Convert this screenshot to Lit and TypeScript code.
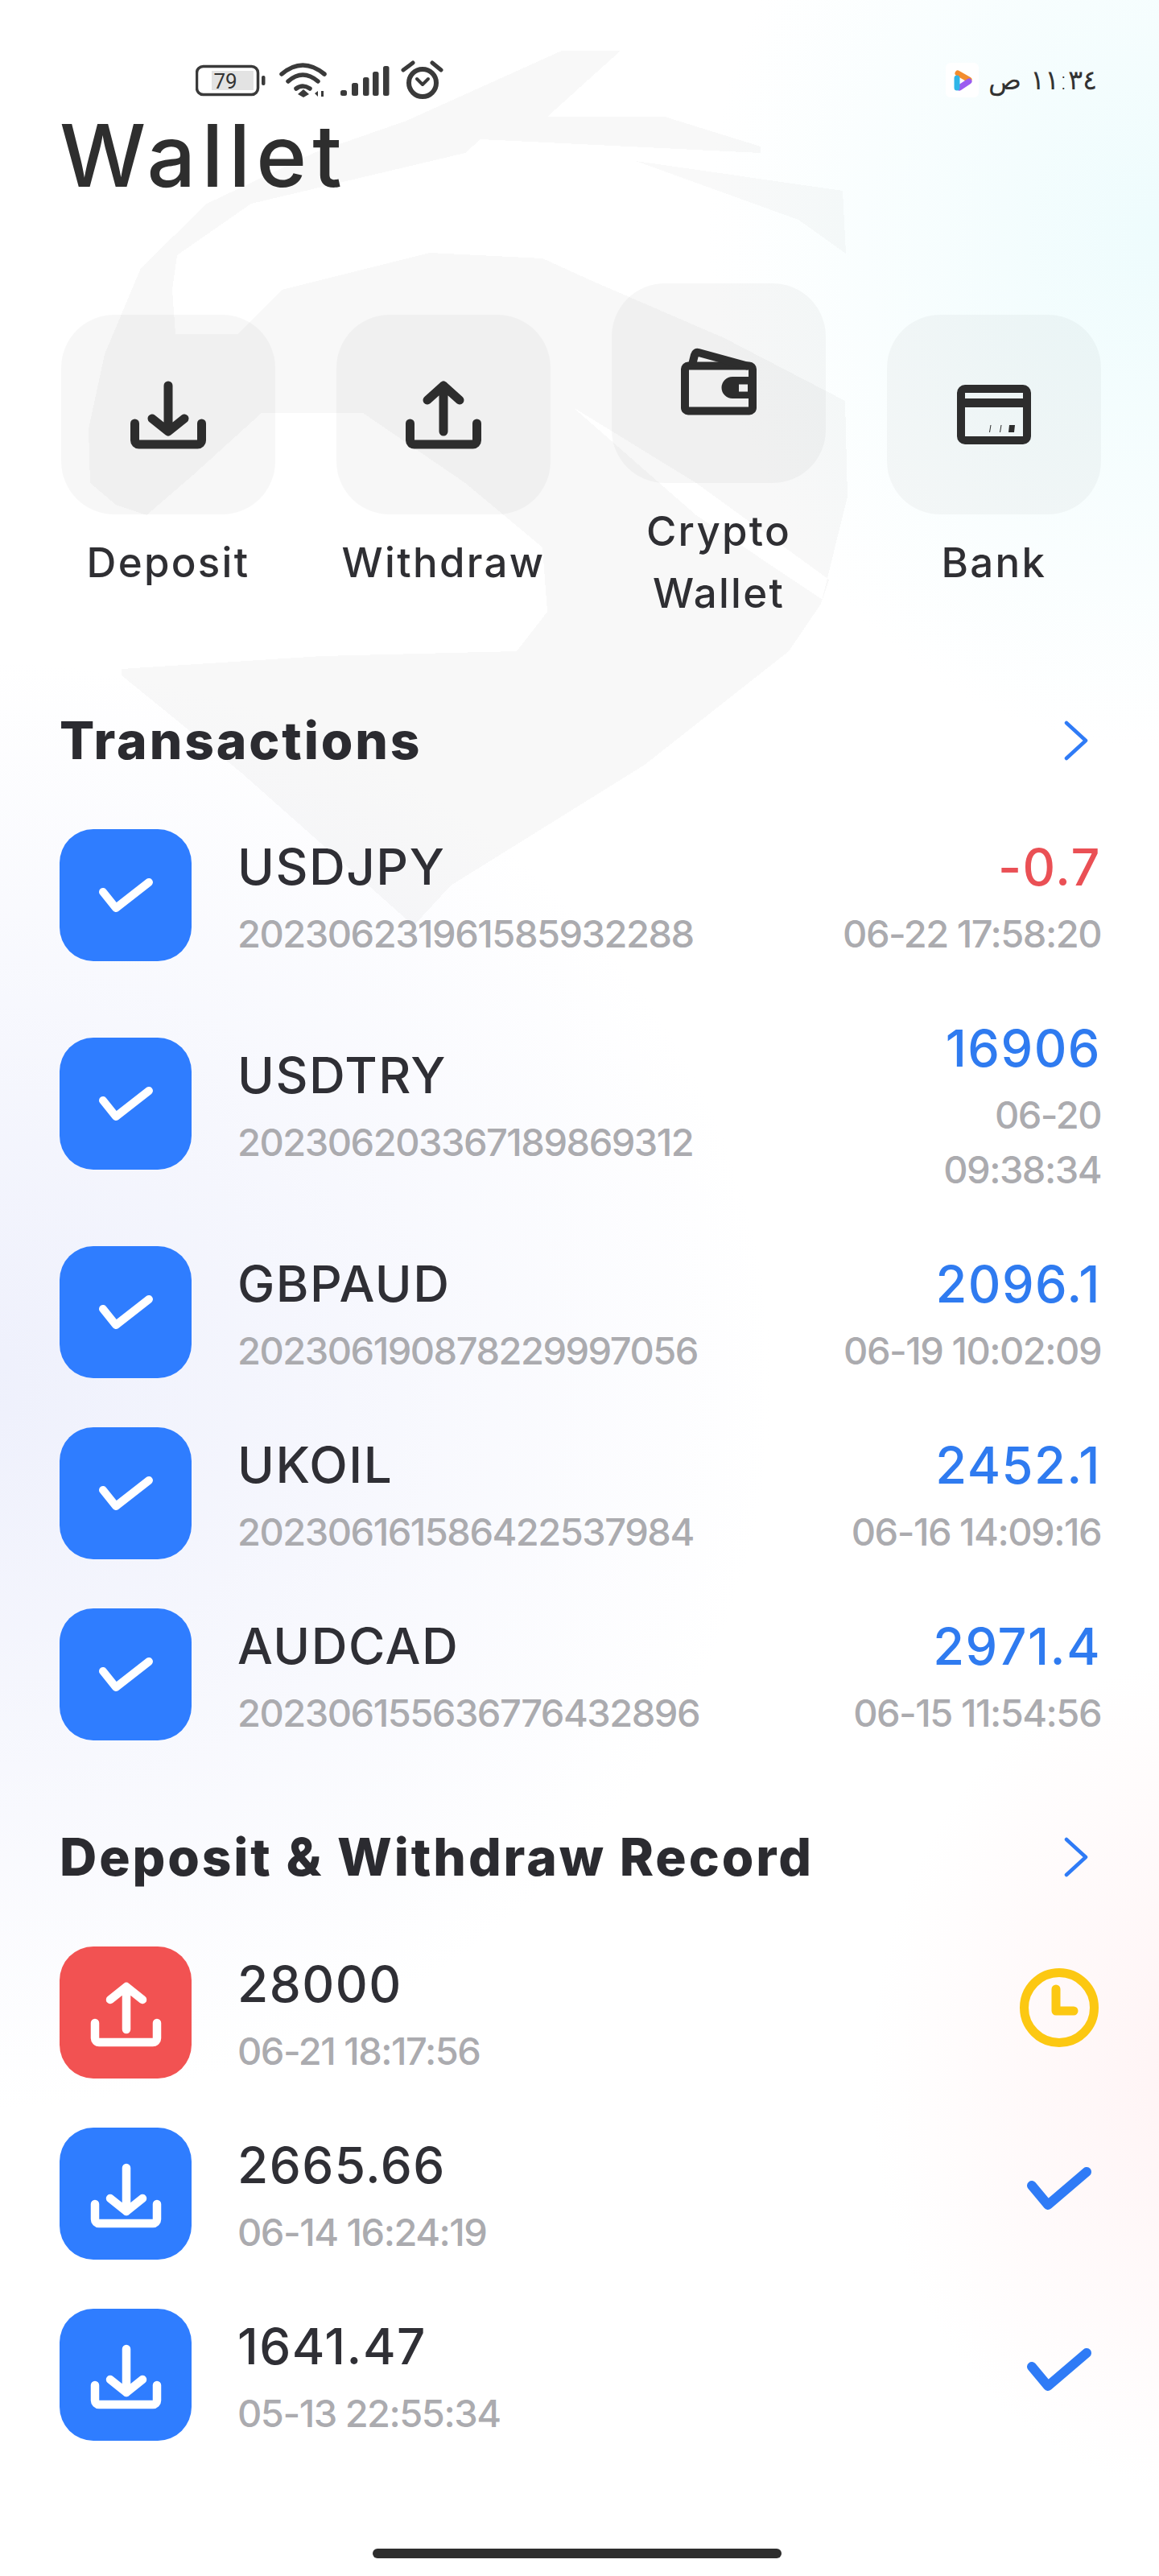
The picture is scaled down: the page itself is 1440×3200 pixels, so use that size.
import { LitElement, html, css, svg } from "lit";
import { customElement } from "lit/decorators.js";

const tray = svg`<path d="M18.500 71V92a5 5 0 0 0 5 5H96.500a5 5 0 0 0 5-5V71"/>`;
const downArrow = svg`<path d="M60 24V80M40 65L60 81L80 65"/>`;
const upArrow = svg`<path d="M60 81V24M40 42L60 24L80 42"/>`;

const icon = (body: unknown) => html`<svg class="ti" viewBox="0 0 120 120" fill="none" stroke="currentColor" stroke-width="11" stroke-linecap="round" stroke-linejoin="round">${body}</svg>`;

const tiles = [
  { label: ["Deposit"], icon: icon(svg`${tray}${downArrow}`) },
  { label: ["Withdraw"], icon: icon(svg`${tray}${upArrow}`) },
  {
    label: ["Crypto", "Wallet"],
    icon: html`<svg class="ti" viewBox="0 0 120 120" fill="none" stroke="currentColor" stroke-width="10" stroke-linejoin="round">
      <rect x="18" y="38.500" width="84" height="56" rx="4"/>
      <path d="M27 37L30 25Q31 21 35 22L97 39"/>
      <path fill="currentColor" stroke="none" fill-rule="evenodd" d="M104 52H77a13.500 13.500 0 0 0 0 27H104ZM85 61.500H96V70.500H85Z"/>
    </svg>`,
  },
  {
    label: ["Bank"],
    icon: html`<svg class="ti" viewBox="0 0 120 120" fill="none" stroke="currentColor" stroke-width="10" stroke-linejoin="round">
      <rect x="19" y="28" width="82" height="64" rx="5"/>
      <rect x="14" y="40" width="92" height="11" fill="currentColor" stroke="none"/>
      <path fill="currentColor" stroke="none" d="M54 82L55.500 73H56.500L55 82ZM67 82L68.500 73H69.500L68 82ZM78 82L79 73H86L85 82Z"/>
    </svg>`,
  },
];

const trades = [
  { name: "USDJPY", id: "202306231961585932288", val: "-0.7", neg: true, date: ["06-22 17:58:20"] },
  { name: "USDTRY", id: "202306203367189869312", val: "16906", date: ["06-20", "09:38:34"] },
  { name: "GBPAUD", id: "202306190878229997056", val: "2096.1", date: ["06-19 10:02:09"] },
  { name: "UKOIL", id: "202306161586422537984", val: "2452.1", date: ["06-16 14:09:16"] },
  { name: "AUDCAD", id: "202306155636776432896", val: "2971.4", date: ["06-15 11:54:56"] },
];

const records = [
  { amount: "28000", date: "06-21 18:17:56", up: true },
  { amount: "2665.66", date: "06-14 16:24:19", up: false },
  { amount: "1641.47", date: "05-13 22:55:34", up: false },
];

const chevron = html`<svg class="chev" viewBox="0 0 30 50" fill="none" stroke="#2f7bf6" stroke-width="4.500" stroke-linecap="round" stroke-linejoin="round"><path d="M3 3L27 25L3 47"/></svg>`;

@customElement("app-root")
export class AppRoot extends LitElement {
  static styles = css`
    :host {
      display: block;
      width: 1440px;
      height: 3200px;
      position: relative;
      overflow: hidden;
      font-family: Inter, "Noto Sans", sans-serif;
      color: #2d2d31;
      background:
        radial-gradient(560px 640px at 1440px 290px, #eefcfd 0%, rgba(238, 252, 253, 0) 100%),
        radial-gradient(1000px 900px at -40px 1720px, #eef0fc 0%, rgba(238, 240, 252, 0) 100%),
        radial-gradient(420px 520px at 1500px 2580px, #fff3f4 0%, rgba(255, 243, 244, 0) 100%),
        #ffffff;
    }
    .mark {
      position: absolute;
      left: 0;
      top: 0;
      width: 1440px;
      height: 1300px;
    }
    .page {
      position: relative;
      display: flex;
      flex-direction: column;
      padding: 75px 72px 0 74px;
    }
    .status {
      display: flex;
      justify-content: space-between;
      align-items: flex-start;
      height: 48px;
      padding-left: 169px;
      padding-right: 5px;
    }
    .status-left {
      width: 310px;
      height: 48px;
      display: block;
    }
    .status-right {
      display: flex;
      align-items: flex-start;
      gap: 12px;
    }
    .play {
      width: 41px;
      height: 43px;
      margin-top: 3px;
      display: block;
    }
    .clock-text {
      font-family: "DejaVu Sans", sans-serif;
      font-size: 34px;
      font-weight: 200;
      line-height: 48px;
      color: #333;
      white-space: nowrap;
    }
    h1 {
      margin: 0;
      height: 137px;
      font-size: 107px;
      line-height: 140px;
      font-weight: 500;
      letter-spacing: 7px;
      color: #2e2e2e;
    }
    .tiles {
      display: flex;
      justify-content: space-between;
      align-items: center;
      margin: 92px 0 0 2px;
    }
    .tile {
      width: 266px;
      display: flex;
      flex-direction: column;
      align-items: center;
      gap: 21px;
    }
    .tile-box {
      width: 266px;
      height: 248px;
      border-radius: 66px;
      background: rgba(0, 0, 0, 0.03);
      display: flex;
      align-items: center;
      justify-content: center;
      color: #2d2d2d;
    }
    .ti {
      width: 120px;
      height: 120px;
      display: block;
    }
    .tile-label {
      font-size: 51px;
      line-height: 77px;
      font-weight: 500;
      letter-spacing: 2.300px;
      text-align: center;
      color: #2f2f33;
    }
    .head {
      display: flex;
      justify-content: space-between;
      align-items: center;
      height: 90px;
      margin-top: 100px;
      padding-right: 16px;
    }
    .head h2 {
      margin: 0;
      font-size: 64px;
      font-weight: 800;
      line-height: 90px;
      letter-spacing: 2.900px;
      color: #2b2b30;
    }
    .chev {
      width: 30px;
      height: 50px;
      display: block;
    }
    .list {
      display: flex;
      flex-direction: column;
      gap: 61px;
      margin-top: 65px;
    }
    .list.second {
      margin-top: 66px;
    }
    .row {
      display: flex;
      align-items: center;
      gap: 57px;
    }
    .badge {
      width: 164px;
      height: 164px;
      border-radius: 42px;
      flex: none;
      display: flex;
      align-items: center;
      justify-content: center;
      background: #2f7dff;
      color: #fff;
    }
    .badge.red {
      background: #f25252;
    }
    .badge svg {
      width: 164px;
      height: 164px;
      display: block;
    }
    .left {
      flex: 1;
      min-width: 0;
    }
    .name {
      font-size: 62px;
      line-height: 94px;
      margin-bottom: 2px;
      font-weight: 500;
      letter-spacing: 1.500px;
      color: #2f2f35;
    }
    .sub {
      font-size: 47px;
      line-height: 68px;
      font-weight: 500;
      letter-spacing: -1.500px;
      color: #ababaf;
      white-space: nowrap;
    }
    .right {
      text-align: right;
      flex: none;
    }
    .val {
      font-size: 63px;
      line-height: 94px;
      margin-bottom: 2px;
      font-weight: 500;
      letter-spacing: 1.500px;
      color: #2f7bf0;
    }
    .val.neg {
      color: #ea5055;
    }
    .status-ico {
      display: block;
      margin-bottom: 12px;
    }
    .clock-ico {
      width: 100px;
      height: 100px;
      margin-right: 2px;
    }
    .check-ico {
      width: 84px;
      height: 56px;
      margin-right: 10px;
    }
    .home {
      width: 508px;
      height: 12px;
      border-radius: 6px;
      background: #2d2d2d;
      margin: 134px 0 0 389px;
    }
  `;

  render() {
    return html`
      <svg class="mark" viewBox="0 0 1440 1300" shape-rendering="crispEdges">
        <path fill="#000" fill-opacity="0.028" fill-rule="evenodd" d="M771 63L698 63L505 150L390 190L257 253L175 333L130 440L110 533L112 600L144 627L182 640L240 590L325 513L451 513L578 600L674 680L680 760L642 809L400 815L151 831L151 839L300 960L514 1150L560 1100L801 950L980 809L1020 750L1053 617L1050 498L900 420L738 350L674 321L534 314L350 360L296 415L218 415L214 360L220 317L312 253L578 190L597 173L945 190L945 182L826 145L680 145Z M712 506L865 640L1022 745L1030 720L865 600Z"/>
        <path fill="#000" fill-opacity="0.024" d="M790 200L1047 237L1051 315L992 273Z"/>
      </svg>
      <div class="page">
        <div class="status">
          <svg class="status-left" viewBox="243 75 310 48">
            <rect x="263" y="88" width="52" height="24" fill="#e3e3e3"/>
            <rect x="244.500" y="82.500" width="76" height="35" rx="8" fill="none" stroke="#3a3a3a" stroke-width="3.500"/>
            <rect x="325" y="94" width="4.500" height="12" rx="2" fill="#3a3a3a"/>
            <text x="280" y="110" text-anchor="middle" font-family="Roboto, sans-serif" font-size="26" fill="#333">79</text>
            <g fill="none" stroke="#3a3a3a" stroke-linecap="round">
              <path stroke-width="5.500" d="M350 92Q376 70 403 92"/>
              <path stroke-width="5.500" d="M358 101Q376 85 395 101"/>
              <path stroke-width="5.500" d="M368 110Q376 104 385 110"/>
            </g>
            <path fill="#3a3a3a" d="M377 111L384 117L377 121L370 117Z"/>
            <path fill="#3a3a3a" d="M391 116L395 113V120ZM399 113H402V120H399Z"/>
            <rect x="423" y="112" width="8" height="7" rx="2.500" fill="#3a3a3a"/>
            <rect x="437" y="103" width="8" height="16" rx="2.500" fill="#3a3a3a"/>
            <rect x="451" y="96" width="7.500" height="23" rx="2.500" fill="#3a3a3a"/>
            <rect x="463" y="89" width="7.500" height="30" rx="2.500" fill="#3a3a3a"/>
            <rect x="476" y="82" width="7.500" height="37" rx="2.500" fill="#3a3a3a"/>
            <g fill="none" stroke="#3a3a3a" stroke-linecap="round" stroke-linejoin="round">
              <circle cx="525" cy="103" r="17" stroke-width="6"/>
              <path stroke-width="5" d="M501 87L513 78M537 78L548 87"/>
              <path stroke-width="4" d="M518 98L525 105L532 98"/>
            </g>
          </svg>
          <div class="status-right">
            <svg class="play" viewBox="1167 78 41 43" fill="none" stroke-width="7" stroke-linecap="round">
              <rect x="1167" y="78" width="41" height="43" rx="6" fill="#fff" stroke="none"/>
              <path stroke="#f28c2e" d="M1182 91L1196 99"/>
              <path stroke="#9b5cf0" d="M1184 109L1196 101"/>
              <path stroke="#2fb5e8" d="M1181 97V109"/>
            </svg>
            <span class="clock-text" dir="rtl">١١:٣٤ ص</span>
          </div>
        </div>

        <h1>Wallet</h1>

        <div class="tiles">
          ${tiles.map(
            (t) => html`<div class="tile">
              <div class="tile-box">${t.icon}</div>
              <div class="tile-label">${t.label.map((l) => html`<div>${l}</div>`)}</div>
            </div>`
          )}
        </div>

        <div class="head"><h2>Transactions</h2>${chevron}</div>
        <div class="list">
          ${trades.map(
            (t) => html`<div class="row">
              <div class="badge">
                <svg viewBox="0 0 164 164" fill="none" stroke="currentColor" stroke-width="10" stroke-linecap="round" stroke-linejoin="round"><path d="M54 78L70 98L111 66"/></svg>
              </div>
              <div class="left">
                <div class="name">${t.name}</div>
                <div class="sub">${t.id}</div>
              </div>
              <div class="right">
                <div class="val ${t.neg ? "neg" : ""}">${t.val}</div>
                ${t.date.map((d) => html`<div class="sub">${d}</div>`)}
              </div>
            </div>`
          )}
        </div>

        <div class="head"><h2>Deposit &amp; Withdraw Record</h2>${chevron}</div>
        <div class="list second">
          ${records.map(
            (r) => html`<div class="row">
              <div class="badge ${r.up ? "red" : ""}">
                <svg viewBox="0 0 164 164" fill="none" stroke="currentColor" stroke-width="10.500" stroke-linecap="round" stroke-linejoin="round">
                  <path d="M44 95V114a5 5 0 0 0 5 5H116a5 5 0 0 0 5-5V95"/>
                  ${r.up
                    ? svg`<path d="M83 103V50M63 66L83 50L103 66"/>`
                    : svg`<path d="M83 50V104M63 88L83 104L103 88"/>`}
                </svg>
              </div>
              <div class="left">
                <div class="name">${r.amount}</div>
                <div class="sub">${r.date}</div>
              </div>
              ${r.up
                ? html`<svg class="status-ico clock-ico" viewBox="0 0 100 100" fill="none" stroke="#fcc812" stroke-width="11" stroke-linecap="round" stroke-linejoin="round"><circle cx="50" cy="50" r="43.500"/><path d="M46 27V54H68"/></svg>`
                : html`<svg class="status-ico check-ico" viewBox="0 0 84 56" fill="none" stroke="#2f7bf6" stroke-width="12" stroke-linecap="round" stroke-linejoin="round"><path d="M8 24L28 48L76 7"/></svg>`}
            </div>`
          )}
        </div>
        <div class="home"></div>
      </div>
    `;
  }
}
